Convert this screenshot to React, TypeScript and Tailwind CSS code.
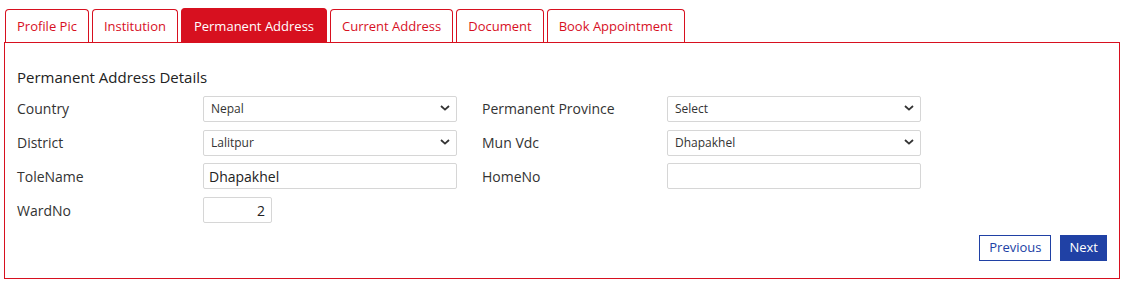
import { useState } from "react";

const tabs = ["Profile Pic", "Institution", "Permanent Address", "Current Address", "Document", "Book Appointment"];

function Chevron() {
  return (
    <svg viewBox="0 0 10 6" className="w-[10px] h-[6px] pointer-events-none absolute right-[7px] top-1/2 -translate-y-1/2">
      <path d="M1 1l4 3.6L9 1" fill="none" stroke="#333" strokeWidth="1.8" />
    </svg>
  );
}

function SelectBox({ value, options }: { value: string; options: string[] }) {
  return (
    <div className="relative w-[254px] h-[26px]">
      <select
        defaultValue={value}
        className="appearance-none w-full h-full border border-[#d6d6d6] rounded-[2px] bg-white pl-[7px] pr-6 pt-px text-[12px] text-[#333] outline-none"
      >
        {options.map((o) => (
          <option key={o}>{o}</option>
        ))}
      </select>
      <Chevron />
    </div>
  );
}

function Label({ children }: { children: string }) {
  return <div className="h-[26px] text-[14px] text-[#333] leading-[28px]">{children}</div>;
}

export default function App() {
  const [active, setActive] = useState(2);
  const [tole, setTole] = useState("Dhapakhel");
  const [homeNo, setHomeNo] = useState("");
  const [ward, setWard] = useState("2");

  return (
    <div className="bg-white w-[1125px] h-[283px] pt-[9px] pl-[4px] font-['Open_Sans',sans-serif]">
      <div className="flex items-end gap-[3px] pl-[1px]">
        {tabs.map((t, i) => (
          <button
            key={t}
            onClick={() => setActive(i)}
            className={
              i === active
                ? "h-[34px] -mt-px pt-[2px] px-[12px] text-[13px] border border-b-0 border-[#d7101f] rounded-t-[4px] bg-[#d7101f] text-white"
                : "h-[33px] pt-[2px] px-[11px] text-[13px] border border-b-0 border-[#d7101f] rounded-t-[4px] bg-white text-[#d7101f]"
            }
          >
            {t}
          </button>
        ))}
      </div>

      <section className="w-[1116px] h-[237px] border border-[#d7101f] px-[12px] pt-[23px]">
        <h2 className="text-[15px] leading-[22px] font-medium text-[#222]">Permanent Address Details</h2>

        <div className="mt-[7px] grid grid-cols-[186px_254px_25px_185px_254px] gap-y-[8px]">
          <Label>Country</Label>
          <SelectBox value="Nepal" options={["Nepal", "India"]} />
          <div />
          <Label>Permanent Province</Label>
          <SelectBox value="Select" options={["Select", "Bagmati"]} />

          <Label>District</Label>
          <SelectBox value="Lalitpur" options={["Lalitpur", "Kathmandu", "Bhaktapur"]} />
          <div />
          <Label>Mun Vdc</Label>
          <SelectBox value="Dhapakhel" options={["Dhapakhel", "Lalitpur Metropolitan"]} />

          <Label>ToleName</Label>
          <input
            value={tole}
            onChange={(e) => setTole(e.target.value)}
            className="w-[254px] h-[26px] border border-[#d6d6d6] rounded-[2px] px-[5px] text-[14px] text-[#222] outline-none"
          />
          <div />
          <Label>HomeNo</Label>
          <input
            value={homeNo}
            onChange={(e) => setHomeNo(e.target.value)}
            className="w-[254px] h-[26px] border border-[#d6d6d6] rounded-[2px] px-[5px] text-[14px] text-[#222] outline-none"
          />

          <Label>WardNo</Label>
          <input
            value={ward}
            onChange={(e) => setWard(e.target.value)}
            className="w-[69px] h-[26px] border border-[#d6d6d6] rounded-[2px] px-[6px] text-right text-[14px] text-[#222] outline-none"
          />
        </div>

        <div className="mt-[12px] flex justify-end gap-[9px]">
          <button className="h-[26px] px-[9px] border border-[#2041a5] text-[#2041a5] text-[13px] bg-white">Previous</button>
          <button className="h-[26px] px-[9px] bg-[#2041a5] text-white text-[13px]">Next</button>
        </div>
      </section>
    </div>
  );
}
